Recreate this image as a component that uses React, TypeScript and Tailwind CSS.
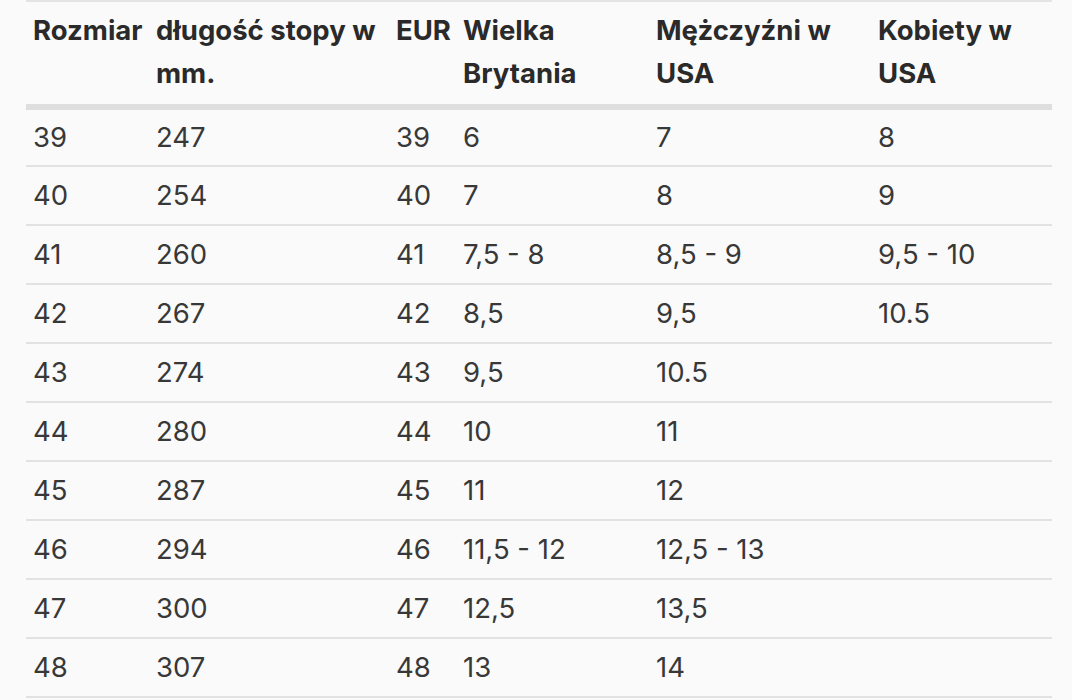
import React from 'react';

const rows: string[][] = [
  ['39', '247', '39', '6', '7', '8'],
  ['40', '254', '40', '7', '8', '9'],
  ['41', '260', '41', '7,5 - 8', '8,5 - 9', '9,5 - 10'],
  ['42', '267', '42', '8,5', '9,5', '10.5'],
  ['43', '274', '43', '9,5', '10.5', ''],
  ['44', '280', '44', '10', '11', ''],
  ['45', '287', '45', '11', '12', ''],
  ['46', '294', '46', '11,5 - 12', '12,5 - 13', ''],
  ['47', '300', '47', '12,5', '13,5', ''],
  ['48', '307', '48', '13', '14', ''],
];

const headers = ['Rozmiar', 'długość stopy w mm.', 'EUR', 'Wielka Brytania', 'Mężczyźni w USA', 'Kobiety w USA'];

export default function App() {
  return (
    <div className="min-h-screen bg-[#fafafa] pl-[26px] pr-[20px] font-['Inter',sans-serif] text-[27.5px] leading-[43px] text-[#383838]">
      <table className="w-[1026px] table-fixed border-collapse border-t-2 border-[#e4e4e4]">
        <colgroup>
          <col className="w-[123px]" />
          <col className="w-[240px]" />
          <col className="w-[67px]" />
          <col className="w-[193px]" />
          <col className="w-[222px]" />
          <col className="w-[181px]" />
        </colgroup>
        <thead>
          <tr className="border-b-[6px] border-[#dedede]">
            {headers.map((h) => (
              <th key={h} className="px-[7px] pt-[7px] pb-[9px] text-left align-top font-bold text-[#2a2a2a]">
                {h}
              </th>
            ))}
          </tr>
        </thead>
        <tbody>
          {rows.map((r) => (
            <tr key={r[0]} className="border-b-2 border-[#e2e2e2]">
              {r.map((c, i) => (
                <td key={i} className="h-[59px] px-[7px] py-[6px] align-middle">
                  {c}
                </td>
              ))}
            </tr>
          ))}
        </tbody>
      </table>
    </div>
  );
}
